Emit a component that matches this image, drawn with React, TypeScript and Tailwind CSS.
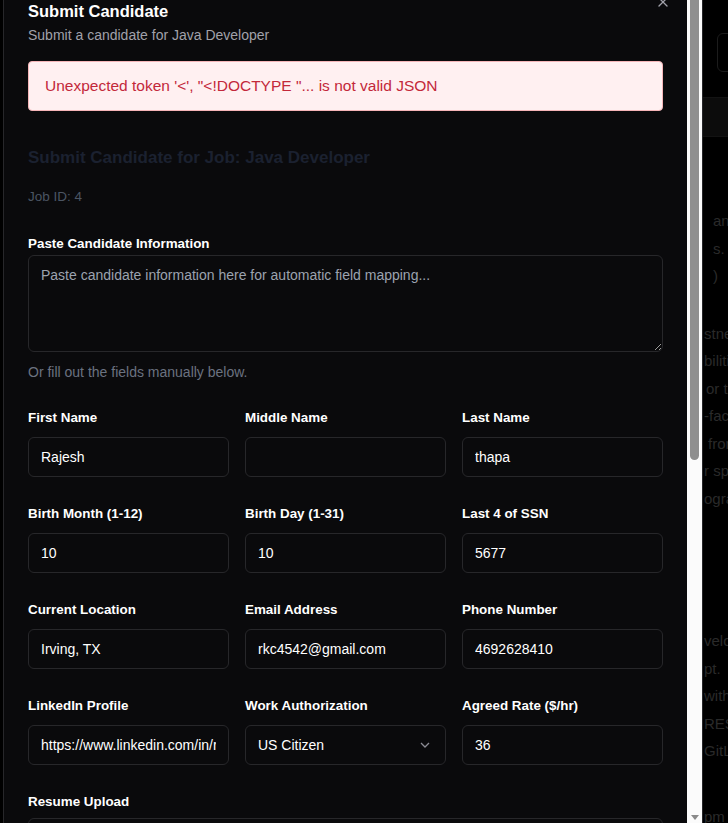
import React from "react";

type Field = { label: string; value: string; select?: boolean };

const fields: Field[] = [
  { label: "First Name", value: "Rajesh" },
  { label: "Middle Name", value: "" },
  { label: "Last Name", value: "thapa" },
  { label: "Birth Month (1-12)", value: "10" },
  { label: "Birth Day (1-31)", value: "10" },
  { label: "Last 4 of SSN", value: "5677" },
  { label: "Current Location", value: "Irving, TX" },
  { label: "Email Address", value: "rkc4542@gmail.com" },
  { label: "Phone Number", value: "4692628410" },
  { label: "LinkedIn Profile", value: "https://www.linkedin.com/in/rajesh-thapa" },
  { label: "Work Authorization", value: "US Citizen", select: true },
  { label: "Agreed Rate ($/hr)", value: "36" },
];

function BgLine({ text, className = "" }: { text: string; className?: string }) {
  return <div className={"h-[27.5px] leading-[27.5px] whitespace-nowrap " + className}>{text}</div>;
}

export default function App() {
  return (
    <div className="relative h-[823px] w-[728px] overflow-hidden bg-black font-['Liberation_Sans',Arial,sans-serif]">
      {/* background page (dimmed) */}
      <div className="ml-[703px] flex flex-col text-[15px] text-[#2a2a2a]">
        <div className="h-[97px] pt-[33px] pl-[14px]">
          <div className="h-[39px] w-[40px] rounded-md border border-[#1c1c1c]" />
        </div>
        <div className="h-[40px] border-y border-[#131313] bg-[#0c0c0c]" />
        <div className="mt-[70px] pl-[10px]">
          <BgLine text="and" />
          <BgLine text="s." />
          <BgLine text=")" />
        </div>
        <div className="mt-[30px] pl-[1px]">
          <BgLine text="stness" />
          <BgLine text="bilities" />
          <BgLine text="or the" className="pl-[2px]" />
          <BgLine text="-facing" />
          <BgLine text="from" className="pl-[4px]" />
          <BgLine text="r spec" />
          <BgLine text="ogram" />
        </div>
        <div className="mt-[115px] pl-[1px]">
          <BgLine text="velop" />
          <BgLine text="pt." />
          <BgLine text="with" />
          <BgLine text="REST" />
          <BgLine text="GitLab" />
        </div>
        <div className="mt-[38px] pl-[1px]">
          <BgLine text="pm" />
        </div>
      </div>

      {/* modal */}
      <div className="absolute left-[3px] top-0 flex h-[823px] w-[700px] overflow-hidden border-x border-[#27272a] bg-[#0a0a0c]">
        <div className="relative flex-1 px-6">
          <svg
            className="absolute left-[651px] top-[-6.5px]"
            width="16"
            height="16"
            viewBox="0 0 24 24"
            fill="none"
            stroke="#a1a1aa"
            strokeWidth="2"
            strokeLinecap="round"
          >
            <path d="M18 6 6 18" />
            <path d="m6 6 12 12" />
          </svg>

          <h2 className="text-[16.5px] font-bold leading-[22px] text-white">Submit Candidate</h2>
          <p className="mt-[3px] text-sm leading-5 text-[#a1a1aa]">Submit a candidate for Java Developer</p>

          <div className="mt-4 rounded-[4px] border border-[#f5b5b8] bg-[#fff0f1] px-4 py-3 text-[15.5px] leading-6 text-[#c3283a]">
            Unexpected token '&lt;', "&lt;!DOCTYPE "... is not valid JSON
          </div>

          <h3 className="mt-[33px] text-[17px] font-bold leading-7 text-[#1b2130]">
            Submit Candidate for Job: Java Developer
          </h3>
          <p className="mt-[15px] text-[13.5px] leading-5 text-[#4b5563]">Job ID: 4</p>

          <label className="mt-[27px] block text-[13.4px] font-bold leading-5 text-white">
            Paste Candidate Information
          </label>
          <textarea
            className="mt-px block h-[97px] w-full rounded-md border border-[#27272a] bg-transparent px-3 py-[9px] text-sm leading-5 text-white outline-none [color-scheme:dark] placeholder:text-[#9ca3af]"
            placeholder="Paste candidate information here for automatic field mapping..."
          />
          <p className="mt-[10px] text-sm leading-5 text-[#6b7280]">Or fill out the fields manually below.</p>

          <div className="mt-[26px] grid grid-cols-3 gap-x-4 gap-y-[27px]">
            {fields.map((f) => (
              <div key={f.label}>
                <label className="block text-[13.4px] font-bold leading-5 text-white">{f.label}</label>
                {f.select ? (
                  <div className="mt-[9px] flex h-10 w-full items-center justify-between rounded-md border border-[#27272a] pl-3 pr-[15px] text-sm text-white">
                    <span>{f.value}</span>
                    <svg width="10" height="6" viewBox="0 0 10 6" fill="none" stroke="#8b8b94" strokeWidth="1.3">
                      <path d="M1 1l4 4 4-4" />
                    </svg>
                  </div>
                ) : (
                  <input
                    readOnly
                    value={f.value}
                    className="mt-[9px] block h-10 w-full rounded-md border border-[#27272a] bg-transparent px-3 text-sm text-white outline-none"
                  />
                )}
              </div>
            ))}
          </div>

          <div className="mt-[27px]">
            <label className="block text-[13.4px] font-bold leading-5 text-white">Resume Upload</label>
            <div className="mt-[6px] h-10 w-full rounded-md border border-[#27272a]" />
          </div>
        </div>

        {/* scrollbar */}
        <div className="flex w-[15px] shrink-0 flex-col justify-between bg-[#fbfbfb]">
          <div className="ml-[3px] h-[460px] w-[9px] rounded-b-[5px] bg-[#8f8f8f]" />
          <div className="mb-[3px] flex justify-center">
            <svg width="8" height="5" viewBox="0 0 8 5">
              <path d="M0 0h8L4 5z" fill="#8a8a8a" />
            </svg>
          </div>
        </div>
      </div>
    </div>
  );
}
